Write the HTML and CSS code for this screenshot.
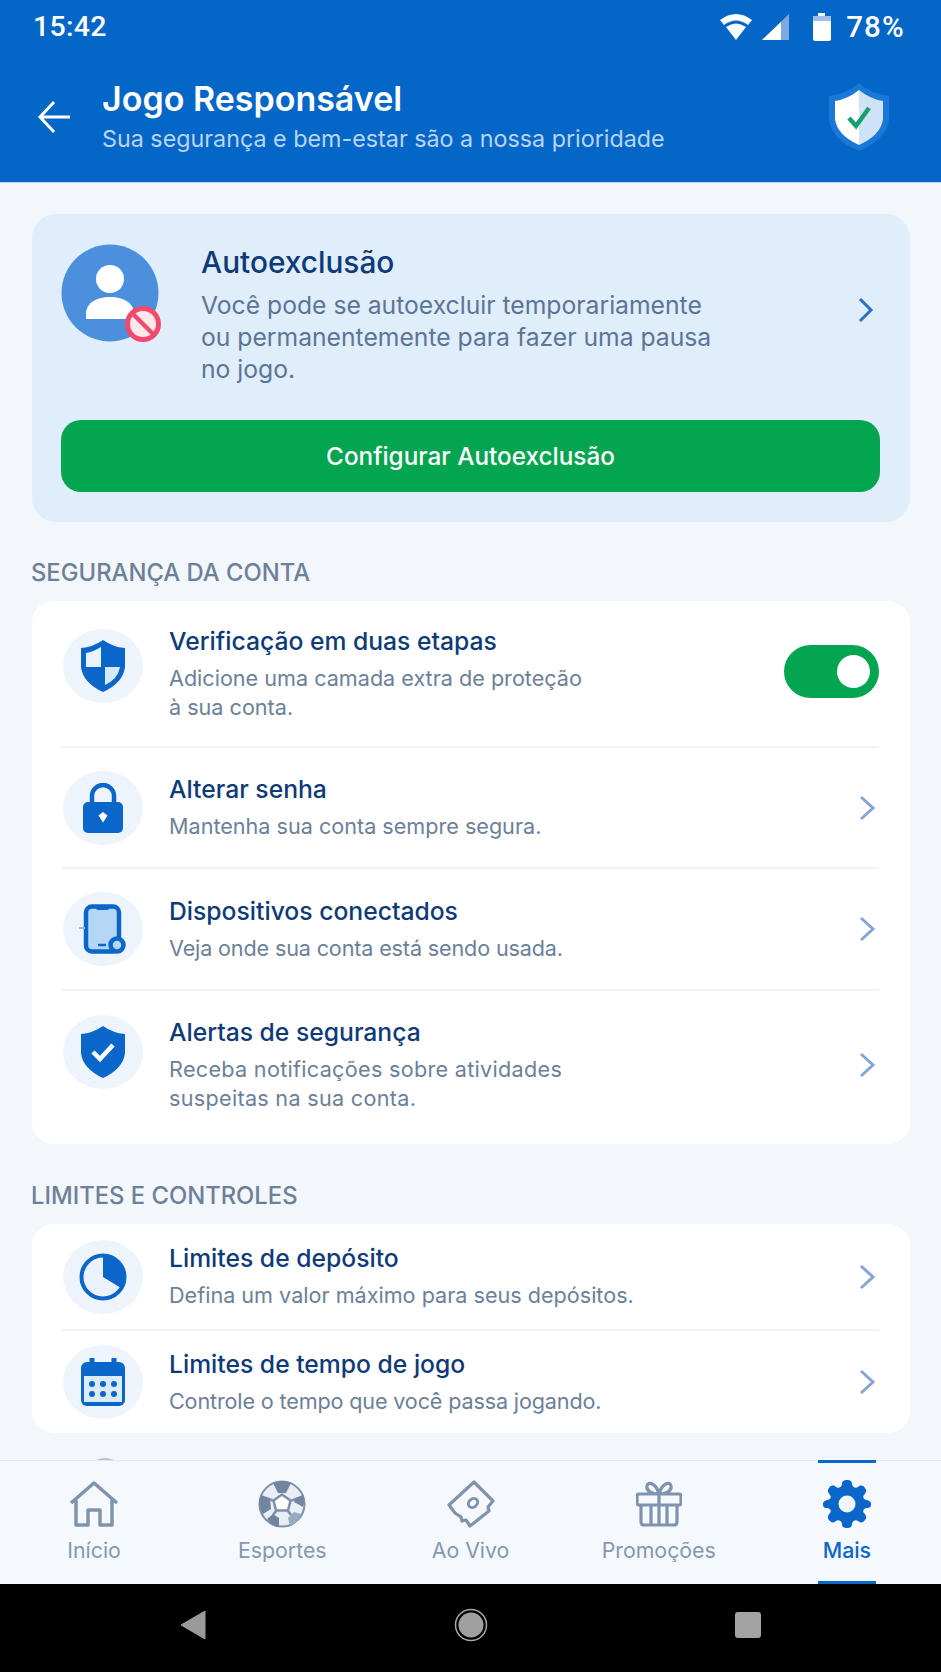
FILE: index.html
```html
<!DOCTYPE html>
<html lang="pt-BR">
<head>
<meta charset="utf-8">
<title>Jogo Responsável</title>
<link rel="stylesheet" href="styles.css">
</head>
<body>
<div class="app">
  <header class="top">
    <div class="status">
      <span class="clock">15:42</span>
      <div class="status-right">
        <svg class="st-wifi" width="32" height="28" viewBox="0 0 32 28"><path d="M0 7 Q16 -5 32 7 L28 12 Q16 3 4 12Z" fill="#fff"/><path d="M6 14 Q16 7 26 14 L16 27Z" fill="#fff"/></svg>
        <svg class="st-signal" width="28" height="28" viewBox="0 0 28 28"><path d="M27 1V27H0Z" fill="#7fa9de"/><path d="M19 9V27H0Z" fill="#fff"/></svg>
        <svg class="st-batt" width="20" height="28" viewBox="0 0 20 28"><path d="M6 0H13V3H17Q19 3 19 5V26Q19 28 17 28H3Q1 28 1 26V5Q1 3 3 3H6Z" fill="#fff"/><rect x="1" y="3" width="18" height="5" fill="#9dbfe8"/></svg>
        <span class="pct">78%</span>
      </div>
    </div>
    <div class="bar">
      <svg class="back" width="34" height="34" viewBox="0 0 34 34"><path d="M33 17H3M17 2 3 17 17 32" fill="none" stroke="#fff" stroke-width="3"/></svg>
      <div class="bar-text">
        <h1>Jogo Responsável</h1>
        <p>Sua segurança e bem-estar são a nossa prioridade</p>
      </div>
      <svg class="bar-shield" width="60" height="68" viewBox="0 0 60 68">
        <path d="M30 0 Q42 11 60 13 V36 Q58 56 30 68 Q2 56 0 36 V13 Q18 11 30 0Z" fill="#1a78d8"/>
        <path d="M30 7 Q41 16 54 18 V36 Q52 52 30 62 Z" fill="#cfe2f6"/>
        <path d="M30 7 Q19 16 6 18 V36 Q8 52 30 62 Z" fill="#fff"/>
        <path d="M20 35 27 43 40 25" fill="none" stroke="#14a06f" stroke-width="4.500"/>
      </svg>
    </div>
  </header>

  <main class="content">
    <section class="hero">
      <div class="hero-top">
        <div class="avatar">
          <svg width="98" height="98" viewBox="0 0 98 98">
            <circle cx="49" cy="49" r="48.5" fill="#4a90dc"/>
            <circle cx="49" cy="35" r="14" fill="#fff"/>
            <path d="M25 75 V70 C25 58 37 53 49 53 C61 53 73 58 73 70 V75Z" fill="#fff"/>
          </svg>
          <svg class="ban" width="38" height="38" viewBox="0 0 38 38">
            <circle cx="19" cy="19" r="15.5" fill="#fde8ec" stroke="#f2496d" stroke-width="5"/>
            <path d="M8 8 30 30" stroke="#f2496d" stroke-width="4.5"/>
          </svg>
        </div>
        <div class="hero-text">
          <h2>Autoexclusão</h2>
          <p>Você pode se autoexcluir temporariamente<br>ou permanentemente para fazer uma pausa<br>no jogo.</p>
        </div>
        <svg class="hero-chev" width="16" height="26" viewBox="0 0 16 26"><path d="M2 2 13 13 2 24" fill="none" stroke="#2a70c4" stroke-width="3"/></svg>
      </div>
      <button class="cta">Configurar Autoexclusão</button>
    </section>

    <h3 class="sec">SEGURANÇA DA CONTA</h3>
    <section class="card">
      <div class="row row-a">
        <div class="ico"><svg width="44" height="52" viewBox="0 0 44 52">
          <path d="M22 0 Q32 7 44 8 V27 Q42 43 22 52 Q2 43 0 27 V8 Q12 7 22 0Z" fill="#0a66c8"/>
          <path d="M20 7 Q12 12 5 13 V27 H20Z" fill="#eaf3fc"/>
          <path d="M24 27 H39 Q37 39 24 45Z" fill="#d6e8fa"/>
        </svg></div>
        <div class="txt"><h4>Verificação em duas etapas</h4><p>Adicione uma camada extra de proteção<br>à sua conta.</p></div>
        <div class="toggle"><span class="knob"></span></div>
      </div>
      <div class="row row-b">
        <div class="ico"><svg width="40" height="50" viewBox="0 0 40 50">
          <path d="M9 22V13a11 11 0 0 1 22 0V22" fill="none" stroke="#0a66c8" stroke-width="4.5"/>
          <rect x="0" y="19" width="40" height="31" rx="5" fill="#0a66c8"/>
          <path d="M20 29l4.500 3.500-4.500 7-4.500-7Z" fill="#fff"/>
        </svg></div>
        <div class="txt"><h4>Alterar senha</h4><p>Mantenha sua conta sempre segura.</p></div>
        <svg class="chev" width="18" height="26" viewBox="0 0 18 26"><path d="M3 2 15 13 3 24" fill="none" stroke="#86a5d6" stroke-width="3"/></svg>
      </div>
      <div class="row row-b2">
        <div class="ico"><svg width="48" height="50" viewBox="0 0 48 50">
          <rect x="7" y="2.500" width="33" height="45" rx="6" fill="#b5d6f5" stroke="#0a66c8" stroke-width="4.500"/>
          <path d="M17 2.500H30V4Q30 6 28 6H19Q17 6 17 4Z" fill="#0a66c8"/>
          <path d="M0 24H6" stroke="#8cc0ee" stroke-width="2"/>
          <path d="M19 41H27" stroke="#0a66c8" stroke-width="2.500"/>
          <circle cx="38" cy="41" r="6.500" fill="#b5d6f5" stroke="#0a66c8" stroke-width="4.500"/>
        </svg></div>
        <div class="txt"><h4>Dispositivos conectados</h4><p class="tight">Veja onde sua conta está sendo usada.</p></div>
        <svg class="chev" width="18" height="26" viewBox="0 0 18 26"><path d="M3 2 15 13 3 24" fill="none" stroke="#86a5d6" stroke-width="3"/></svg>
      </div>
      <div class="row row-c">
        <div class="ico"><svg width="44" height="52" viewBox="0 0 44 52">
          <path d="M22 0 Q32 7 44 8 V27 Q42 43 22 52 Q2 43 0 27 V8 Q12 7 22 0Z" fill="#0a66c8"/>
          <path d="M12 26 19 33 32 19" fill="none" stroke="#fff" stroke-width="4.500"/>
        </svg></div>
        <div class="txt"><h4>Alertas de segurança</h4><p class="wide">Receba notificações sobre atividades<br>suspeitas na sua conta.</p></div>
        <svg class="chev" width="18" height="26" viewBox="0 0 18 26"><path d="M3 2 15 13 3 24" fill="none" stroke="#86a5d6" stroke-width="3"/></svg>
      </div>
    </section>

    <h3 class="sec sec-2">LIMITES E CONTROLES</h3>
    <section class="card">
      <div class="row row-d">
        <div class="ico"><svg width="48" height="48" viewBox="0 0 48 48">
          <circle cx="24" cy="24" r="21.500" fill="#eaf3fc" stroke="#0a66c8" stroke-width="4"/>
          <path d="M24 3A21 21 0 0 1 42 35L24 24Z" fill="#0a66c8"/>
        </svg></div>
        <div class="txt"><h4>Limites de depósito</h4><p>Defina um valor máximo para seus depósitos.</p></div>
        <svg class="chev" width="18" height="26" viewBox="0 0 18 26"><path d="M3 2 15 13 3 24" fill="none" stroke="#86a5d6" stroke-width="3"/></svg>
      </div>
      <div class="row row-e">
        <div class="ico"><svg width="44" height="48" viewBox="0 0 44 48">
          <rect x="0" y="4" width="44" height="44" rx="6" fill="#0a66c8"/>
          <rect x="3" y="18" width="38" height="26" fill="#dcebfa"/>
          <path d="M11 0V9M33 0V9" stroke="#0a66c8" stroke-width="5" stroke-linecap="round"/>
          <g fill="#0a66c8"><circle cx="11" cy="26" r="3"/><circle cx="22" cy="26" r="3"/><circle cx="33" cy="26" r="3"/><circle cx="11" cy="36" r="3"/><circle cx="22" cy="36" r="3"/><circle cx="33" cy="36" r="3"/></g>
        </svg></div>
        <div class="txt"><h4>Limites de tempo de jogo</h4><p class="tight">Controle o tempo que você passa jogando.</p></div>
        <svg class="chev" width="18" height="26" viewBox="0 0 18 26"><path d="M3 2 15 13 3 24" fill="none" stroke="#86a5d6" stroke-width="3"/></svg>
      </div>
    </section>
    <div class="peek"></div>
  </main>

  <nav class="nav">
    <div class="tab">
      <svg width="50" height="46" viewBox="0 0 50 46"><path d="M2 22 25 2 48 22M7 19V44H19V29H31V44H43V19" fill="none" stroke="#7f93ad" stroke-width="3.500" stroke-linejoin="round"/></svg>
      <span>Início</span>
    </div>
    <div class="tab">
      <svg width="48" height="48" viewBox="0 0 48 48">
        <circle cx="24" cy="24" r="22.500" fill="#e9eef5" stroke="#7c8fab" stroke-width="2"/>
        <g fill="#71859f">
          <path d="M15 3 Q24 -1 33 3 L28 13 H20Z"/>
          <path d="M3 15 L12 18 L13 29 L5 34 Q-1 24 3 15Z"/>
          <path d="M45 15 L37 18 L36 22 L45 27 Q47 21 45 15Z"/>
          <path d="M9 39 L15 34 L21 38 L21 47 Q14 46 9 39Z"/>
          <path d="M32 46 L30 38 L36 32 L43 34 Q40 43 32 46Z" fill="#9cacc0"/>
        </g>
        <path d="M24 14.500 32.500 20.500 30 30.500H18L15.500 20.500Z" fill="#fff" stroke="#7c8fab" stroke-width="2.500" stroke-linejoin="round"/>
        <path d="M18 31 15 35M30 31 33 35M33 21 37 19M15 21 12 19" stroke="#7c8fab" stroke-width="2.500"/>
      </svg>
      <span>Esportes</span>
    </div>
    <div class="tab">
      <svg width="48" height="48" viewBox="0 0 48 48"><path d="M2 25 27 2 46 21 41 27 42 31 23 46 19 40 15 41 14 37 8 33Z" fill="none" stroke="#7f93ad" stroke-width="3.200" stroke-linejoin="round"/><ellipse cx="26" cy="23" rx="5" ry="4" fill="none" stroke="#7f93ad" stroke-width="3" transform="rotate(-40 26 23)"/></svg>
      <span>Ao Vivo</span>
    </div>
    <div class="tab">
      <svg width="46" height="46" viewBox="0 0 46 46"><path d="M23 13V44M5 24V41Q5 44 8 44H38Q41 44 41 41V24M3 13H43Q45 13 45 15V22Q45 24 43 24H3Q1 24 1 22V15Q1 13 3 13ZM23 13C16 13 10 10 11 5 12 0 20 2 23 13 26 2 34 0 35 5 36 10 30 13 23 13ZM15 24V44M31 24V44" fill="none" stroke="#7f93ad" stroke-width="3.200"/></svg>
      <span>Promoções</span>
    </div>
    <div class="tab tab-on">
      <svg width="48" height="48" viewBox="0 0 48 48"><path d="M24 0C27 0 29 1 29 4 29 7 33 9 35 7 37 5 40 5 42 8 44 10 43 13 41 15 39 17 41 20 44 20 47 21 48 22 48 24 48 27 47 28 44 28 41 28 39 31 41 33 43 35 44 38 42 40 40 43 37 43 35 41 33 39 29 41 29 44 29 47 27 48 24 48 21 48 19 47 19 44 19 41 15 39 13 41 11 43 8 43 6 40 4 38 5 35 7 33 9 31 7 28 4 28 1 28 0 27 0 24 0 22 1 21 4 20 7 20 9 17 7 15 5 13 4 10 6 8 8 5 11 5 13 7 15 9 19 7 19 4 19 1 21 0 24 0Z" fill="#0a66c8"/><circle cx="24" cy="24" r="8.500" fill="#f2f6fb"/></svg>
      <span>Mais</span>
    </div>
  </nav>

  <div class="sysnav">
    <svg width="26" height="30" viewBox="0 0 26 30"><path d="M25 1V29L1 15Z" fill="#9a9a9a" stroke="#9a9a9a" stroke-linejoin="round"/></svg>
    <svg width="34" height="34" viewBox="0 0 34 34"><circle cx="17" cy="17" r="15.500" fill="none" stroke="#a8a8a8" stroke-width="1.500"/><circle cx="17" cy="17" r="12.500" fill="#9f9f9f"/></svg>
    <span class="sq"></span>
  </div>
</div>
</body>
</html>
```
FILE: styles.css
```css
* { box-sizing: border-box; margin: 0; padding: 0; }
html, body { height: 100%; }
body { font-family: Inter, "Liberation Sans", sans-serif; background: #f3f6fb; overflow: hidden; }
.app { width: 941px; height: 1672px; display: flex; flex-direction: column; overflow: hidden; }

.top { height: 183px; flex: none; background: #0466c6; border-bottom: 1px solid #bcd8f3; color: #fff; }
.status { height: 54px; padding: 13px 36px 0 33px; display: flex; justify-content: space-between; align-items: flex-start; }
.clock { font-family: Roboto, sans-serif; font-size: 28.500px; line-height: 28px; font-weight: 500; letter-spacing: .3px; }
.status-right { display: flex; align-items: center; }
.st-wifi { margin-right: 10px; }
.st-signal { margin-right: 22px; }
.st-batt { margin-right: 14px; }
.pct { font-family: Roboto, sans-serif; font-size: 29.500px; line-height: 28px; font-weight: 500; letter-spacing: 1.200px; }
.bar { display: flex; align-items: center; padding: 25px 52px 0 37px; }
.back { flex: none; margin-right: 31px; }
.bar-text { flex: 1; }
.bar-text h1 { font-size: 34px; line-height: 40px; font-weight: 600; }
.bar-text p { font-size: 23.300px; line-height: 30px; color: #b8d5f4; margin-top: 5px; font-weight: 400; }
.bar-shield { flex: none; }

.content { flex: 1; min-height: 0; overflow: hidden; padding: 31px 31px 0 32px; }
.hero { height: 308px; background: #e0edfb; border-radius: 24px; padding: 30px 30px 30px 29px; display: flex; flex-direction: column; justify-content: space-between; }
.hero-top { display: flex; align-items: flex-start; }
.avatar { width: 98px; height: 98px; flex: none; position: relative; margin-right: 42px; }
.ban { position: absolute; right: -3px; bottom: -1px; }
.hero-text { flex: 1; }
.hero-text h2 { font-size: 29.800px; line-height: 36px; font-weight: 500; color: #0e3a78; }
.hero-text p { font-size: 24.700px; line-height: 32px; color: #5b7596; margin-top: 9px; }
.hero-chev { flex: none; margin: 53px 6px 0 0; }
.cta { height: 72px; border: 0; border-radius: 20px; background: #03a550; color: #fff; font: 500 24.300px Inter, sans-serif; }

.sec { font-size: 23.800px; line-height: 30px; font-weight: 500; color: #6d8099; margin: 36px 0 13px -1px; }
.sec-2 { margin: 37px 0 13px -1px; }
.card { background: #fff; border-radius: 22px; padding: 0 31px 0 29px; }
.row { display: flex; align-items: center; }
.row + .row { border-top: 2px solid #f0f4fa; }
.row-a { height: 145px; }
.row-b { height: 121px; }
.row-b2 { height: 122px; }
.row-c { height: 155px; padding-bottom: 5px; }
.row-d { height: 105px; }
.row-e { height: 104px; }
.ico { width: 80px; height: 74px; border-radius: 50%; background: #edf4fc; flex: none; display: flex; align-items: center; justify-content: center; margin: 0 26px 0 2px; }
.row-a .ico { margin-bottom: 16px; }
.row-c .ico { margin-bottom: 26px; }
.txt { flex: 1; min-width: 0; }
.txt h4 { font-size: 24.700px; line-height: 30px; font-weight: 500; color: #0e3a78; }
.txt p { font-size: 21.600px; line-height: 29px; color: #6c8099; margin-top: 8px; }
.txt .tight { letter-spacing: -.15px; }
.txt .wide { letter-spacing: .3px; }
.chev { flex: none; margin-right: 3px; }
.toggle { width: 95px; height: 53px; border-radius: 27px; background: #03a550; flex: none; display: flex; align-items: center; justify-content: flex-end; padding-right: 9px; margin-bottom: 4px; }
.knob { width: 33px; height: 33px; border-radius: 50%; background: #fff; }
.peek { width: 40px; height: 40px; margin: 25px 0 0 53px; border-radius: 50%; background: #b9c0ca; }

.nav { height: 124px; flex: none; background: #f5f8fc; border-top: 1px solid #e4e8ee; display: flex; position: relative; z-index: 1; }
.tab { flex: 1; display: flex; flex-direction: column; align-items: center; padding-top: 19px; color: #8598b1; font-size: 21.300px; font-weight: 400; position: relative; }
.tab svg { height: 48px; }
.tab span { margin-top: 9px; line-height: 26px; }
.tab-on { color: #0a66c8; font-weight: 500; }
.tab-on::before, .tab-on::after { content: ""; position: absolute; left: 50%; width: 58px; margin-left: -29px; height: 3px; background: #0a66c8; }
.tab-on::before { top: -1px; }
.tab-on::after { bottom: 0; }

.sysnav { height: 88px; flex: none; background: #000; display: flex; justify-content: space-between; align-items: center; padding: 0 180px 6px 180px; }
.sq { width: 26px; height: 26px; border-radius: 3px; background: #a3a3a3; }
```
